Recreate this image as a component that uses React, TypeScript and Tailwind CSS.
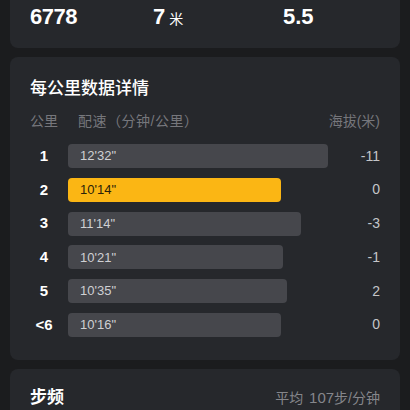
import React from "react";

const rows = [
  { km: "1", pace: "12'32\"", width: 260, alt: "-11", best: false },
  { km: "2", pace: "10'14\"", width: 213, alt: "0", best: true },
  { km: "3", pace: "11'14\"", width: 233, alt: "-3", best: false },
  { km: "4", pace: "10'21\"", width: 215, alt: "-1", best: false },
  { km: "5", pace: "10'35\"", width: 219, alt: "2", best: false },
  { km: "<6", pace: "10'16\"", width: 213, alt: "0", best: false },
];

const font = { fontFamily: '"Liberation Sans", "Noto Sans CJK SC", sans-serif' };

const App = () => {
  return (
    <div className="min-h-[410px] w-[410px] overflow-hidden bg-[#1b1c1e] px-[10px]" style={font}>
      {/* summary card, top cut off */}
      <div className="flex h-[48px] items-start rounded-b-lg bg-[#26282c] px-[20px]">
        <div className="mt-[3px] flex items-baseline text-white">
          <span className="w-[123px] text-[22px] font-bold leading-[28px] tracking-[-0.5px]">6778</span>
          <span className="w-[130px] text-[22px] font-bold leading-[28px]">
            7<span className="ml-[4px] text-[14px] font-normal">米</span>
          </span>
          <span className="text-[22px] font-bold leading-[28px]">5.5</span>
        </div>
      </div>

      {/* per km details */}
      <div className="mt-[9px] rounded-lg bg-[#26282c] px-[20px] pt-[20px] pb-[23px]">
        <p className="text-[17px] font-medium leading-[24px] text-white">每公里数据详情</p>
        <div className="mt-[10px] flex items-center text-[14px] leading-[20px] text-[#76777c]">
          <span className="w-[48px]">公里</span>
          <span className="tracking-[0.5px]">配速（分钟/公里）</span>
          <span className="ml-auto">海拔(米)</span>
        </div>
        <div className="mt-[13px] flex flex-col gap-[9.8px]">
          {rows.map((r) => (
            <div key={r.km} className="flex h-[24px] items-center">
              <span className="w-[28px] text-center text-[15px] font-bold text-white">{r.km}</span>
              <div
                className={
                  r.best
                    ? "ml-[10px] flex h-[24px] items-center rounded-[4px] bg-[#fbb614] pl-[12px] text-[13px] text-[#2a2209]"
                    : "ml-[10px] flex h-[24px] items-center rounded-[4px] bg-[#46474c] pl-[12px] text-[13px] text-[#cfd0d3]"
                }
                style={{ width: r.width }}
              >
                {r.pace}
              </div>
              <span className="ml-auto text-[14px] text-[#c4c5c8]">{r.alt}</span>
            </div>
          ))}
        </div>
      </div>

      {/* cadence */}
      <div className="mt-[9px] h-[60px] rounded-lg bg-[#26282c] px-[20px] pt-[17px]">
        <div className="flex items-center">
          <span className="text-[17px] font-bold leading-[24px] text-white">步频</span>
          <span className="ml-auto text-[14px] text-[#85868b]">
            平均 <span className="ml-[2px] text-[15px]">107</span>步/分钟
          </span>
        </div>
      </div>
    </div>
  );
};

export default App;
